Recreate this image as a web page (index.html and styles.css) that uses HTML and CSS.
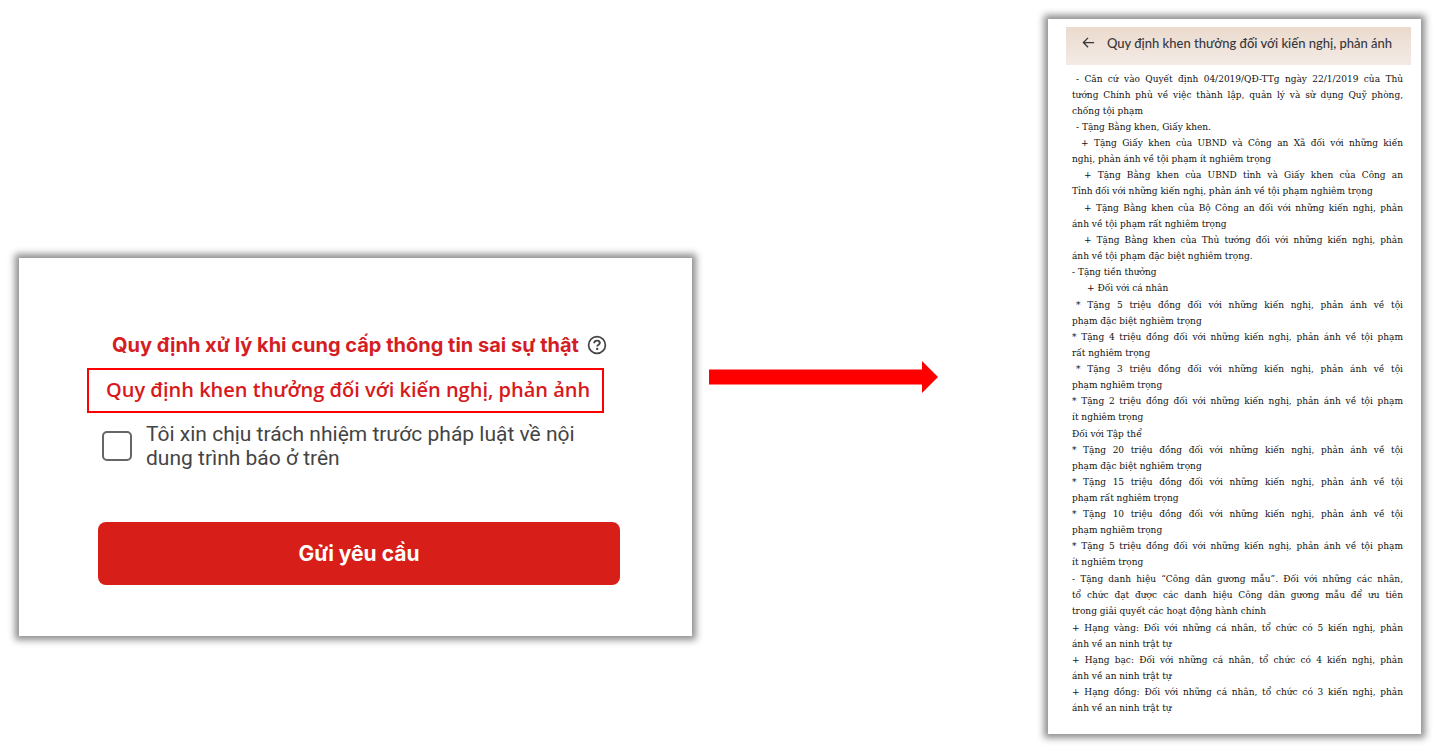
FILE: index.html
```html
<!DOCTYPE html>
<html lang="vi">
<head>
<meta charset="utf-8">
<title>Quy định khen thưởng đối với kiến nghị, phản ánh</title>
<link rel="stylesheet" href="styles.css">
</head>
<body>
<main class="guide">
  <form class="sheet request">
    <div class="rule">
      <a class="rule-link" href="#rules">Quy định xử lý khi cung cấp thông tin sai sự thật</a>
      <svg class="help" viewBox="0 0 20 20" aria-hidden="true">
        <circle cx="10" cy="10" r="8.4" fill="none" stroke="currentColor" stroke-width="1.7"/>
        <path d="M7.2 8.2C7.2 6.6 8.4 5.6 10 5.6s2.8.9 2.8 2.3c0 1.8-2.6 1.9-2.6 3.7" fill="none" stroke="currentColor" stroke-width="1.9"/>
        <circle cx="10.2" cy="13.9" r="1.2" fill="currentColor"/>
      </svg>
    </div>
    <a class="reward-link" href="#reward">Quy định khen thưởng đối với kiến nghị, phản ảnh</a>
    <div class="agree">
      <input class="agree-box" type="checkbox" id="agree">
      <label class="agree-label" for="agree">Tôi xin chịu trách nhiệm trước pháp luật về nội dung trình báo ở trên</label>
    </div>
    <button class="send" type="button">Gửi yêu cầu</button>
  </form>

  <div class="pointer">
    <svg class="arrow" viewBox="0 0 229 32" aria-hidden="true"><path d="M0 8.5H213V0L229 16L213 32V23.5H0Z" fill="#f00"/></svg>
  </div>

  <article class="sheet document" id="reward">
    <header class="bar">
      <button class="back" type="button" aria-label="Quay lại">
        <svg class="back-icon" viewBox="0 0 14 12" aria-hidden="true"><path d="M13 5.5H1.5M6.5 .5L1.5 5.5l5 5" fill="none" stroke="currentColor" stroke-width="1.4"/></svg>
      </button>
      <h1 class="bar-title">Quy định khen thưởng đối với kiến nghị, phản ánh</h1>
    </header>
    <div class="text">
      <section>
        <p><span class="full in-1">- Căn cứ vào Quyết định 04/2019/QĐ-TTg ngày 22/1/2019 của Thủ</span> <span class="full">tướng Chính phủ về việc thành lập, quản lý và sử dụng Quỹ phòng,</span> chống tội phạm</p>
        <p class="in-1">- Tặng Bằng khen, Giấy khen.</p>
        <p class="in-2"><span class="full">+ Tặng Giấy khen của UBND và Công an Xã đối với những kiến</span> nghị, phản ánh về tội phạm ít nghiêm trọng</p>
        <p class="in-3"><span class="full">+ Tặng Bằng khen của UBND tỉnh và Giấy khen của Công an</span> Tỉnh đối với những kiến nghị, phản ánh về tội phạm nghiêm trọng</p>
      </section>
      <section>
        <p class="in-3"><span class="full">+ Tặng Bằng khen của Bộ Công an đối với những kiến nghị, phản</span> ánh về tội phạm rất nghiêm trọng</p>
        <p class="in-3"><span class="full">+ Tặng Bằng khen của Thủ tướng đối với những kiến nghị, phản</span> ánh về tội phạm đặc biệt nghiêm trọng.</p>
        <p>- Tặng tiền thưởng</p>
        <p class="in-4">+ Đối với cá nhân</p>
      </section>
      <section>
        <p class="in-1"><span class="full">* Tặng 5 triệu đồng đối với những kiến nghị, phản ánh về tội</span> phạm đặc biệt nghiêm trọng</p>
        <p><span class="full">* Tặng 4 triệu đồng đối với những kiến nghị, phản ánh về tội phạm</span> rất nghiêm trọng</p>
        <p class="in-1"><span class="full">* Tặng 3 triệu đồng đối với những kiến nghị, phản ánh về tội</span> phạm nghiêm trọng</p>
        <p><span class="full">* Tặng 2 triệu đồng đối với những kiến nghị, phản ánh về tội phạm</span> ít nghiêm trọng</p>
      </section>
      <section>
        <p>Đối với Tập thể</p>
        <p><span class="full">* Tặng 20 triệu đồng đối với những kiến nghị, phản ánh về tội</span> phạm đặc biệt nghiêm trọng</p>
        <p><span class="full">* Tặng 15 triệu đồng đối với những kiến nghị, phản ánh về tội</span> phạm rất nghiêm trọng</p>
        <p><span class="full">* Tặng 10 triệu đồng đối với những kiến nghị, phản ánh về tội</span> phạm nghiêm trọng</p>
        <p><span class="full">* Tặng 5 triệu đồng đối với những kiến nghị, phản ánh về tội phạm</span> ít nghiêm trọng</p>
      </section>
      <section>
        <p><span class="full">- Tặng danh hiệu “Công dân gương mẫu”. Đối với những các nhân,</span> <span class="full">tổ chức đạt được các danh hiệu Công dân gương mẫu để ưu tiên</span> trong giải quyết các hoạt động hành chính</p>
      </section>
      <section>
        <p><span class="full">+ Hạng vàng: Đối với những cá nhân, tổ chức có 5 kiến nghị, phản</span> ánh về an ninh trật tự</p>
        <p><span class="full">+ Hạng bạc: Đối với những cá nhân, tổ chức có 4 kiến nghị, phản</span> ánh về an ninh trật tự</p>
        <p><span class="full">+ Hạng đồng: Đối với những cá nhân, tổ chức có 3 kiến nghị, phản</span> ánh về an ninh trật tự</p>
      </section>
    </div>
  </article>
</main>
</body>
</html>
```
FILE: styles.css
```css
* { box-sizing: border-box; }
body {
  margin: 0;
  background: #fff;
  color: #444;
  font-family: Inter, "Open Sans", sans-serif;
}
.guide {
  display: grid;
  grid-template-columns: 673fr 356fr 373fr;
  align-items: start;
  padding: 19px 13px 17px 19px;
}
.sheet {
  background: #fff;
  box-shadow: 0 0 7px 4px rgba(0, 0, 0, .45);
}
.request {
  display: flex;
  flex-direction: column;
  margin-top: 239px;
  padding: 73px 72px 51px 79px;
}
.rule {
  display: flex;
  align-items: center;
  gap: 8px;
  height: 28px;
  padding-left: 14px;
  white-space: nowrap;
}
.rule-link, .reward-link {
  color: #d41d24;
  font-size: 20px;
  font-weight: 700;
  line-height: 28px;
  text-decoration: none;
}
.help { width: 20px; height: 20px; flex: none; }
.reward-link {
  align-self: flex-start;
  margin: 9px 0 9px -11px;
  padding: 6px 12px 7px 17px;
  border: 2px solid #f00;
  color: #d8191c;
  font-family: "Open Sans", sans-serif;
  font-weight: 600;
  white-space: nowrap;
}
.agree {
  display: flex;
  align-items: center;
  gap: 14px;
  padding-left: 4px;
}
.agree-box {
  appearance: none;
  flex: none;
  width: 30px;
  height: 30px;
  margin: 0;
  border: 2px solid #666;
  border-radius: 5px;
}
.agree-label {
  max-width: 440px;
  font-family: Roboto, sans-serif;
  font-size: 21px;
  line-height: 24px;
}
.send {
  margin-top: 52px;
  padding: 18px 0 17px;
  border: 0;
  border-radius: 8px;
  background: #d71e18;
  color: #fff;
  font: 700 21px/28px Inter, sans-serif;
}
.pointer { padding: 342px 110px 0 17px; }
.arrow { display: block; width: 100%; }
.document { padding: 8px 10px 18px 18px; }
.bar {
  display: flex;
  align-items: center;
  gap: 12px;
  padding: 6px 0 12px 16px;
  background: linear-gradient(#ebdacd, #f3ebe6);
  color: #37373b;
  white-space: nowrap;
}
.back {
  display: flex;
  padding: 0;
  border: 0;
  background: none;
  color: inherit;
}
.back-icon { width: 13px; height: 12px; }
.bar-title {
  margin: 0;
  font: 500 13px/20px Lato, "Open Sans", sans-serif;
}
.text {
  display: flex;
  flex-direction: column;
  gap: 1px;
  padding: 6px 8px 0 6px;
  color: #111;
  font: 9px/16px "DejaVu Serif", serif;
}
.text p { margin: 0; }
.full { display: block; text-align: justify; text-align-last: justify; }
.in-1 { text-indent: 4px; }
.in-2 { text-indent: 9px; }
.in-3 { text-indent: 12px; }
.in-4 { text-indent: 15px; }
```
